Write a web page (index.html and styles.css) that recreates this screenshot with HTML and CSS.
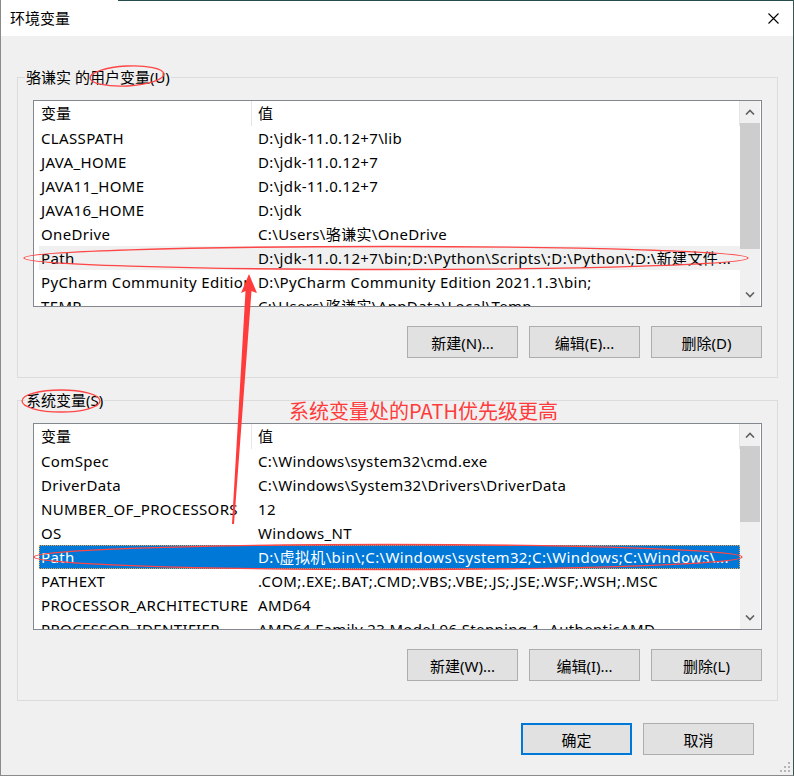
FILE: index.html
```html
<!DOCTYPE html>
<html lang="zh-CN">
<head>
    <meta charset="UTF-8">
    <title>环境变量</title>
    <link rel="stylesheet" href="styles.css">
</head>
<body>
    <div class="window">
        <div class="title_bar">
            <span class="title">环境变量</span>
            <button type="button" class="button_close">
                <svg width="11" height="11" viewBox="0 0 11 11"><path d="M0.5 0.5L10.5 10.5M10.5 0.5L0.5 10.5" stroke="#000" stroke-width="1.1" fill="none"/></svg>
            </button>
        </div>

        <fieldset class="group">
            <legend class="group_title">骆谦实 的用户变量(U)</legend>
            <div class="group_inner">
                <div class="list">
                    <div class="list_body">
                        <div class="list_head"><span class="cell_name">变量</span><span class="cell_value">值</span></div>
                        <div class="row"><span class="cell_name">CLASSPATH</span><span class="cell_value">D:\jdk-11.0.12+7\lib</span></div>
                        <div class="row"><span class="cell_name">JAVA_HOME</span><span class="cell_value">D:\jdk-11.0.12+7</span></div>
                        <div class="row"><span class="cell_name">JAVA11_HOME</span><span class="cell_value">D:\jdk-11.0.12+7</span></div>
                        <div class="row"><span class="cell_name">JAVA16_HOME</span><span class="cell_value">D:\jdk</span></div>
                        <div class="row"><span class="cell_name">OneDrive</span><span class="cell_value">C:\Users\骆谦实\OneDrive</span></div>
                        <div class="row hover"><span class="cell_name">Path</span><span class="cell_value">D:\jdk-11.0.12+7\bin;D:\Python\Scripts\;D:\Python\;D:\新建文件...</span></div>
                        <div class="row"><span class="cell_name">PyCharm Community Edition</span><span class="cell_value">D:\PyCharm Community Edition 2021.1.3\bin;</span></div>
                        <div class="row"><span class="cell_name">TEMP</span><span class="cell_value">C:\Users\骆谦实\AppData\Local\Temp</span></div>
                    </div>
                    <div class="scroll_bar">
                        <span class="scroll_up"><svg width="10" height="6" viewBox="0 0 10 6"><path d="M1 5.5L5 1.5L9 5.5" stroke="#606060" stroke-width="1.6" fill="none"/></svg></span>
                        <span class="scroll_thumb thumb_user"></span>
                        <span class="scroll_down"><svg width="10" height="6" viewBox="0 0 10 6"><path d="M1 0.5L5 4.5L9 0.5" stroke="#606060" stroke-width="1.6" fill="none"/></svg></span>
                    </div>
                </div>
                <div class="button_area">
                    <button type="button" class="button">新建(N)...</button>
                    <button type="button" class="button">编辑(E)...</button>
                    <button type="button" class="button">删除(D)</button>
                </div>
            </div>
        </fieldset>

        <fieldset class="group">
            <legend class="group_title">系统变量(S)</legend>
            <div class="group_inner">
                <div class="list">
                    <div class="list_body">
                        <div class="list_head"><span class="cell_name">变量</span><span class="cell_value">值</span></div>
                        <div class="row"><span class="cell_name">ComSpec</span><span class="cell_value">C:\Windows\system32\cmd.exe</span></div>
                        <div class="row"><span class="cell_name">DriverData</span><span class="cell_value">C:\Windows\System32\Drivers\DriverData</span></div>
                        <div class="row"><span class="cell_name">NUMBER_OF_PROCESSORS</span><span class="cell_value">12</span></div>
                        <div class="row"><span class="cell_name">OS</span><span class="cell_value">Windows_NT</span></div>
                        <div class="row selected"><span class="cell_name">Path</span><span class="cell_value">D:\虚拟机\bin\;C:\Windows\system32;C:\Windows;C:\Windows\...</span></div>
                        <div class="row"><span class="cell_name">PATHEXT</span><span class="cell_value">.COM;.EXE;.BAT;.CMD;.VBS;.VBE;.JS;.JSE;.WSF;.WSH;.MSC</span></div>
                        <div class="row"><span class="cell_name">PROCESSOR_ARCHITECTURE</span><span class="cell_value">AMD64</span></div>
                        <div class="row"><span class="cell_name">PROCESSOR_IDENTIFIER</span><span class="cell_value">AMD64 Family 23 Model 96 Stepping 1, AuthenticAMD</span></div>
                    </div>
                    <div class="scroll_bar">
                        <span class="scroll_up"><svg width="10" height="6" viewBox="0 0 10 6"><path d="M1 5.5L5 1.5L9 5.5" stroke="#606060" stroke-width="1.6" fill="none"/></svg></span>
                        <span class="scroll_thumb thumb_system"></span>
                        <span class="scroll_down"><svg width="10" height="6" viewBox="0 0 10 6"><path d="M1 0.5L5 4.5L9 0.5" stroke="#606060" stroke-width="1.6" fill="none"/></svg></span>
                    </div>
                </div>
                <div class="button_area">
                    <button type="button" class="button">新建(W)...</button>
                    <button type="button" class="button">编辑(I)...</button>
                    <button type="button" class="button">删除(L)</button>
                </div>
            </div>
        </fieldset>

        <div class="dialog_buttons">
            <button type="button" class="button button_default">确定</button>
            <button type="button" class="button">取消</button>
        </div>

        <svg class="grip" width="10" height="10" viewBox="0 0 10 10" fill="#b5b5b5">
            <rect x="8" y="0" width="2" height="2"/>
            <rect x="4" y="4" width="2" height="2"/>
            <rect x="8" y="4" width="2" height="2"/>
            <rect x="0" y="8" width="2" height="2"/>
            <rect x="4" y="8" width="2" height="2"/>
            <rect x="8" y="8" width="2" height="2"/>
        </svg>

        <div class="marks">
            <svg class="marks_draw" width="794" height="776" viewBox="0 0 794 776">
                <g fill="none" stroke="#ff4545" stroke-width="1.3">
                    <ellipse cx="127" cy="76" rx="37" ry="10" transform="rotate(-3 127 76)"/>
                    <ellipse cx="61" cy="401" rx="39" ry="11"/>
                    <ellipse cx="386" cy="258" rx="362" ry="11.5"/>
                    <ellipse cx="388" cy="557" rx="354" ry="12.5"/>
                </g>
                <polygon points="249,274 257,293 251.5,291 234,524 232,524 245.5,291 241,293" fill="#ff3b3b"/>
            </svg>
            <span class="mark_text">系统变量处的PATH优先级更高</span>
        </div>
    </div>
</body>
</html>
```

FILE: styles.css
```css
body {
    margin: 0;
    background: #fff;
}

.window {
    position: relative;
    width: 794px;
    height: 776px;
    box-sizing: border-box;
    border: 1px solid #8a8a8a;
    border-top: 0;
    border-right-color: #3a5454;
    background: #f0f0f0;
    font-family: "Noto Sans", "Noto Sans CJK SC", sans-serif;
    font-size: 15px;
    color: #000;
    overflow: hidden;
}

.title_bar {
    display: flex;
    justify-content: space-between;
    align-items: center;
    height: 36px;
    background: linear-gradient(#244c4c, #244c4c) 117px 0 / 100% 1px no-repeat, #fff;
}

.title {
    padding-left: 9px;
    font-family: "Noto Sans CJK SC", sans-serif;
    line-height: 20px;
}

.button_close {
    display: flex;
    align-items: center;
    justify-content: center;
    width: 40px;
    height: 36px;
    padding: 0;
    border: 0;
    background: transparent;
}

.group {
    min-width: 0;
    margin: 31px 15px 0 16px;
    padding: 0;
    border: 1px solid #dcdcdc;
}

.group + .group {
    margin-top: 12px;
}

.group_title {
    margin-left: 7px;
    padding: 0 1px;
    line-height: 20px;
}

.group_inner {
    padding: 13px 15px 19px;
}

.list {
    display: flex;
    height: 207px;
    box-sizing: border-box;
    padding-right: 1px;
    border: 1px solid #828790;
    background: #fff;
}

.list_body {
    flex: 1;
    min-width: 0;
    padding-left: 5px;
    overflow: hidden;
}

.list_head {
    display: flex;
    height: 25px;
    line-height: 25px;
    border-right: 1px solid #e5e5e5;
}

.row {
    display: flex;
    height: 24px;
    line-height: 24px;
    letter-spacing: 0.35px;
}

.row.hover {
    background: #f0f0f0;
}

.row.selected {
    background: #0078d7;
    color: #fff;
    outline: 1px dotted #f0a040;
    outline-offset: -1px;
}

.cell_name {
    flex-shrink: 0;
    width: 213px;
    box-sizing: border-box;
    padding: 0 4px 0 2px;
    overflow: hidden;
    white-space: nowrap;
}

.list_head .cell_name {
    border-right: 1px solid #e5e5e5;
}

.cell_value {
    flex: 1;
    min-width: 0;
    padding-left: 6px;
    overflow: hidden;
    white-space: nowrap;
}

.scroll_bar {
    display: flex;
    flex-direction: column;
    width: 20px;
    background: #f0f0f0;
}

.scroll_up,
.scroll_down {
    display: flex;
    align-items: center;
    justify-content: center;
    height: 22px;
}

.scroll_down {
    margin-top: auto;
}

.scroll_thumb {
    background: #cdcdcd;
}

.thumb_user {
    height: 126px;
}

.thumb_system {
    height: 76px;
}

.button_area {
    display: flex;
    justify-content: flex-end;
    gap: 11px;
    margin-top: 19px;
}

.button {
    width: 111px;
    height: 32px;
    box-sizing: border-box;
    padding: 0;
    border: 1px solid #adadad;
    background: #e1e1e1;
    font: inherit;
    color: #000;
}

.button_default {
    border: 2px solid #0078d7;
}

.dialog_buttons {
    display: flex;
    justify-content: flex-end;
    gap: 11px;
    margin-top: 22px;
    padding-right: 39px;
}

.grip {
    position: absolute;
    right: 3px;
    bottom: 3px;
}

.marks {
    position: absolute;
    left: -1px;
    top: 0;
    width: 794px;
    height: 776px;
    pointer-events: none;
}

.marks_draw {
    display: block;
}

.mark_text {
    position: absolute;
    left: 289px;
    top: 399px;
    font-family: "Noto Sans CJK SC", sans-serif;
    font-size: 20px;
    line-height: 24px;
    color: #ff3b3b;
}
```
